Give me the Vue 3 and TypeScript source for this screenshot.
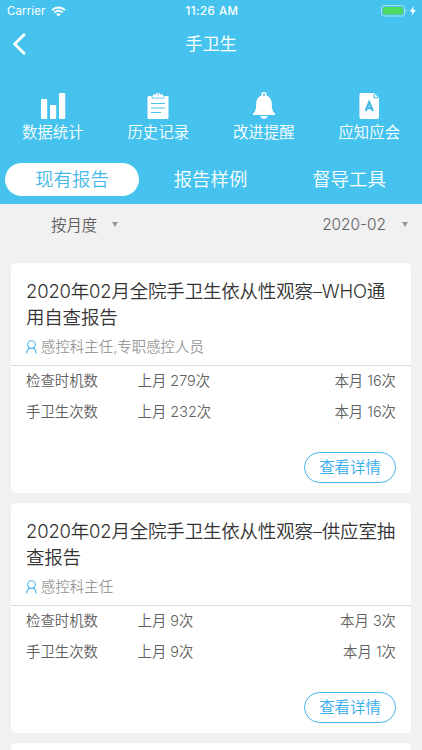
<script setup lang="ts">
import { ref } from 'vue'

interface Metric {
  name: string
  last: number
  current: number
}
interface Report {
  title: string
  roles: string
  metrics: Metric[]
}

const actions = [
  { icon: 'chart', label: '数据统计' },
  { icon: 'clipboard', label: '历史记录' },
  { icon: 'bell', label: '改进提醒' },
  { icon: 'doc', label: '应知应会' },
]
const tabs = ['现有报告', '报告样例', '督导工具']
const activeTab = ref(0)

const reports: Report[] = [
  {
    title: '2020年02月全院手卫生依从性观察–WHO通用自查报告',
    roles: '感控科主任,专职感控人员',
    metrics: [
      { name: '检查时机数', last: 279, current: 16 },
      { name: '手卫生次数', last: 232, current: 16 },
    ],
  },
  {
    title: '2020年02月全院手卫生依从性观察–供应室抽查报告',
    roles: '感控科主任',
    metrics: [
      { name: '检查时机数', last: 9, current: 3 },
      { name: '手卫生次数', last: 9, current: 1 },
    ],
  },
]
</script>

<template>
  <div class="screen">
    <header class="header">
      <div class="status">
        <div class="carrier">
          <span>Carrier</span>
          <svg width="15" height="11" viewBox="0 0 15 11" fill="none" stroke="#fff" stroke-width="1.9">
            <path d="M1 4.1a9.3 9.3 0 0 1 13 0" />
            <path d="M3.3 6.5a6 6 0 0 1 8.4 0" />
            <path d="M7.5 10.6 5.2 8.3a3.3 3.3 0 0 1 4.6 0z" fill="#fff" stroke="none" />
          </svg>
        </div>
        <div class="clock">11:26 AM</div>
        <div class="power">
          <svg width="36" height="12" viewBox="0 0 36 12">
            <rect x=".5" y=".6" width="23" height="10.4" rx="2.4" fill="none" stroke="#fff" stroke-opacity=".5" />
            <rect x="2" y="2" width="20" height="7.6" rx="1.2" fill="#4cd964" />
            <path d="M24.8 4v3.6c1.2-.5 1.2-3.1 0-3.6z" fill="#fff" fill-opacity=".5" />
            <path d="M33 .8 28.8 6.5h2.5l-1 4.3 4.5-5.9h-2.6z" fill="#fff" />
          </svg>
        </div>
      </div>

      <div class="nav">
        <svg class="back" width="14" height="22" viewBox="0 0 14 22" fill="none" stroke="#fff" stroke-width="2.9" stroke-linecap="round" stroke-linejoin="round">
          <path d="M12 1.8 2.7 11l9.3 9.2" />
        </svg>
        <h1>手卫生</h1>
      </div>

      <div class="actions">
        <div v-for="a in actions" :key="a.label" class="action">
          <svg v-if="a.icon === 'chart'" width="28" height="28" viewBox="0 0 28 28" fill="#fff">
            <rect x="2" y="7" width="6.2" height="20" rx="1" />
            <rect x="11" y="13" width="6.2" height="14" rx="1" />
            <rect x="20" y="1" width="6.2" height="26" rx="1" />
          </svg>
          <svg v-else-if="a.icon === 'clipboard'" width="28" height="28" viewBox="0 0 28 28">
            <path d="M4.5 4h19q1 0 1 1v21q0 1-1 1h-19q-1 0-1-1V5q0-1 1-1z" fill="#fff" />
            <path d="M8.2 3.5v2.6h11.6V3.5" fill="none" stroke="#45c3ee" stroke-width=".9" />
            <path d="M8.8 5.2V2.5h2.8a2.5 2.5 0 0 1 4.8 0h2.8v2.7z" fill="#fff" />
            <circle cx="14" cy="2.6" r=".8" fill="#45c3ee" />
            <path d="M7 11.5h14M7 16h14M7 20.500h10" stroke="#45c3ee" stroke-width="1" />
          </svg>
          <svg v-else-if="a.icon === 'bell'" width="28" height="28" viewBox="0 0 28 28">
            <circle cx="14" cy="2.7" r="2" fill="none" stroke="#fff" stroke-width="1.6" />
            <path d="M14 3.200c5.200 0 7.700 4 7.800 8.600.1 5.800.8 7.600 3.200 9.800V23H3v-1.400c2.400-2.200 3.100-4 3.200-9.800C6.300 7.200 8.800 3.200 14 3.200z" fill="#fff" />
            <circle cx="14" cy="2.7" r="1" fill="#45c3ee" />
            <path d="M10.300 24h7.400c-.6 1.900-2 3-3.700 3s-3.100-1.100-3.700-3z" fill="#fff" />
          </svg>
          <svg v-else width="28" height="28" viewBox="0 0 28 28">
            <path d="M6.400 1h12.600l5 5v19q0 2-2 2H6.400q-2 0-2-2V3q0-2 2-2z" fill="#fff" />
            <path d="M19 2v3.800h4" fill="none" stroke="#45c3ee" stroke-width="1.1" />
            <path d="M10.600 19 14.200 10.200l3.600 8.800M11.800 16.200h4.800" fill="none" stroke="#45b9e8" stroke-width="2.2" />
          </svg>
          <span>{{ a.label }}</span>
        </div>
      </div>

      <div class="tabs">
        <button v-for="(t, i) in tabs" :key="t" class="tab" :class="{ active: i === activeTab }" @click="activeTab = i">
          {{ t }}
        </button>
      </div>
    </header>

    <div class="filters">
      <div class="filter">按月度<i class="caret"></i></div>
      <div class="filter">2020-02<i class="caret"></i></div>
    </div>

    <main class="list">
      <article v-for="r in reports" :key="r.title" class="card">
        <div class="head">
          <h2>{{ r.title }}</h2>
          <div class="roles">
            <svg width="11" height="14" viewBox="0 0 11 14" fill="none" stroke="#47b4ea" stroke-width="1.1">
              <circle cx="5.5" cy="4.6" r="3.8" />
              <path d="M.7 13.6C.8 10.5 2.3 8.7 4 8.1M10.3 13.6C10.2 10.5 8.7 8.7 7 8.1" />
            </svg>
            <span>{{ r.roles }}</span>
          </div>
        </div>
        <div class="body">
          <div v-for="m in r.metrics" :key="m.name" class="row">
            <span class="name">{{ m.name }}</span>
            <span class="last">上月 {{ m.last }}次</span>
            <span class="current">本月 {{ m.current }}次</span>
          </div>
        </div>
        <div class="foot">
          <button class="detail">查看详情</button>
        </div>
      </article>
      <article class="card"></article>
    </main>
  </div>
</template>

<style>
body {
  margin: 0;
  background: #f1f1f1;
}
</style>

<style scoped>
.screen {
  width: 422px;
  height: 750px;
  overflow: hidden;
  background: #f1f1f1;
  font-family: Inter, 'Noto Sans CJK SC', sans-serif;
  font-weight: 350;
  color: #606060;
}
h1,
h2 {
  margin: 0;
  font-weight: inherit;
}
button {
  padding: 0;
  border: 0;
  background: none;
  font: inherit;
  color: inherit;
}
svg {
  display: block;
  flex: none;
}
.header {
  height: 204px;
  background: #45c3ee;
  color: #fff;
}
.status {
  display: grid;
  grid-template-columns: 1fr auto 1fr;
  align-items: center;
  height: 22px;
  padding: 0 5px 0 7px;
  font-size: 11.5px;
}
.carrier {
  display: flex;
  align-items: center;
  gap: 5.5px;
  font-weight: 400;
  letter-spacing: 0.1px;
}
.clock {
  font-weight: 500;
  letter-spacing: 0.5px;
}
.power {
  justify-self: end;
}
.nav {
  display: grid;
  grid-template-columns: 60px 1fr 60px;
  align-items: center;
  height: 43px;
}
.back {
  margin-left: 12px;
}
.nav h1 {
  text-align: center;
  font-size: 17.2px;
  line-height: 24px;
  font-weight: 400;
}
.actions {
  display: grid;
  grid-template-columns: repeat(4, 1fr);
  padding-top: 27px;
}
.action {
  display: flex;
  flex-direction: column;
  align-items: center;
  gap: 2.5px;
  font-size: 15.4px;
  line-height: 20px;
}
.tabs {
  display: grid;
  grid-template-columns: repeat(3, 134px);
  column-gap: 4.5px;
  padding: 20.5px 0 0 5px;
}
.tab {
  height: 33px;
  border-radius: 17px;
  font-size: 18.4px;
  line-height: 33px;
}
.tab.active {
  background: #fff;
  color: #45b9e8;
}
.filters {
  display: flex;
  justify-content: space-between;
  align-items: center;
  height: 40px;
  padding: 0 14px 0 51px;
  font-size: 15.4px;
}
.filter {
  display: flex;
  align-items: center;
  gap: 15px;
}
.filter:last-child {
  gap: 16px;
}
.caret {
  border: 3.5px solid transparent;
  border-top: 5px solid #999;
  border-bottom: 0;
}
.list {
  display: flex;
  flex-direction: column;
  gap: 10.5px;
  padding: 19px 11px 0;
}
.card {
  box-sizing: border-box;
  flex: none;
  height: 229.5px;
  border-radius: 5px;
  background: #fff;
}
.head {
  box-sizing: border-box;
  height: 103px;
  padding: 16px 10px 0 15px;
  border-bottom: 1px solid #dcdcdc;
}
.head h2 {
  font-size: 18.5px;
  line-height: 25.5px;
  letter-spacing: -0.2px;
  color: #333;
}
.roles {
  display: flex;
  align-items: center;
  gap: 4px;
  margin-top: 6px;
  font-size: 14.45px;
  line-height: 22px;
  color: #999;
}
.row {
  display: grid;
  grid-template-columns: 111.5px 1fr auto;
  height: 30.5px;
  padding: 0 15px;
  font-size: 14.4px;
  line-height: 30.5px;
}
.foot {
  display: flex;
  justify-content: flex-end;
  padding: 25px 15px 0 0;
}
.detail {
  box-sizing: border-box;
  width: 92px;
  height: 31px;
  border: 1px solid #47b4ea;
  border-radius: 16px;
  font-size: 15.4px;
  line-height: 28px;
  color: #36abee;
}
</style>
